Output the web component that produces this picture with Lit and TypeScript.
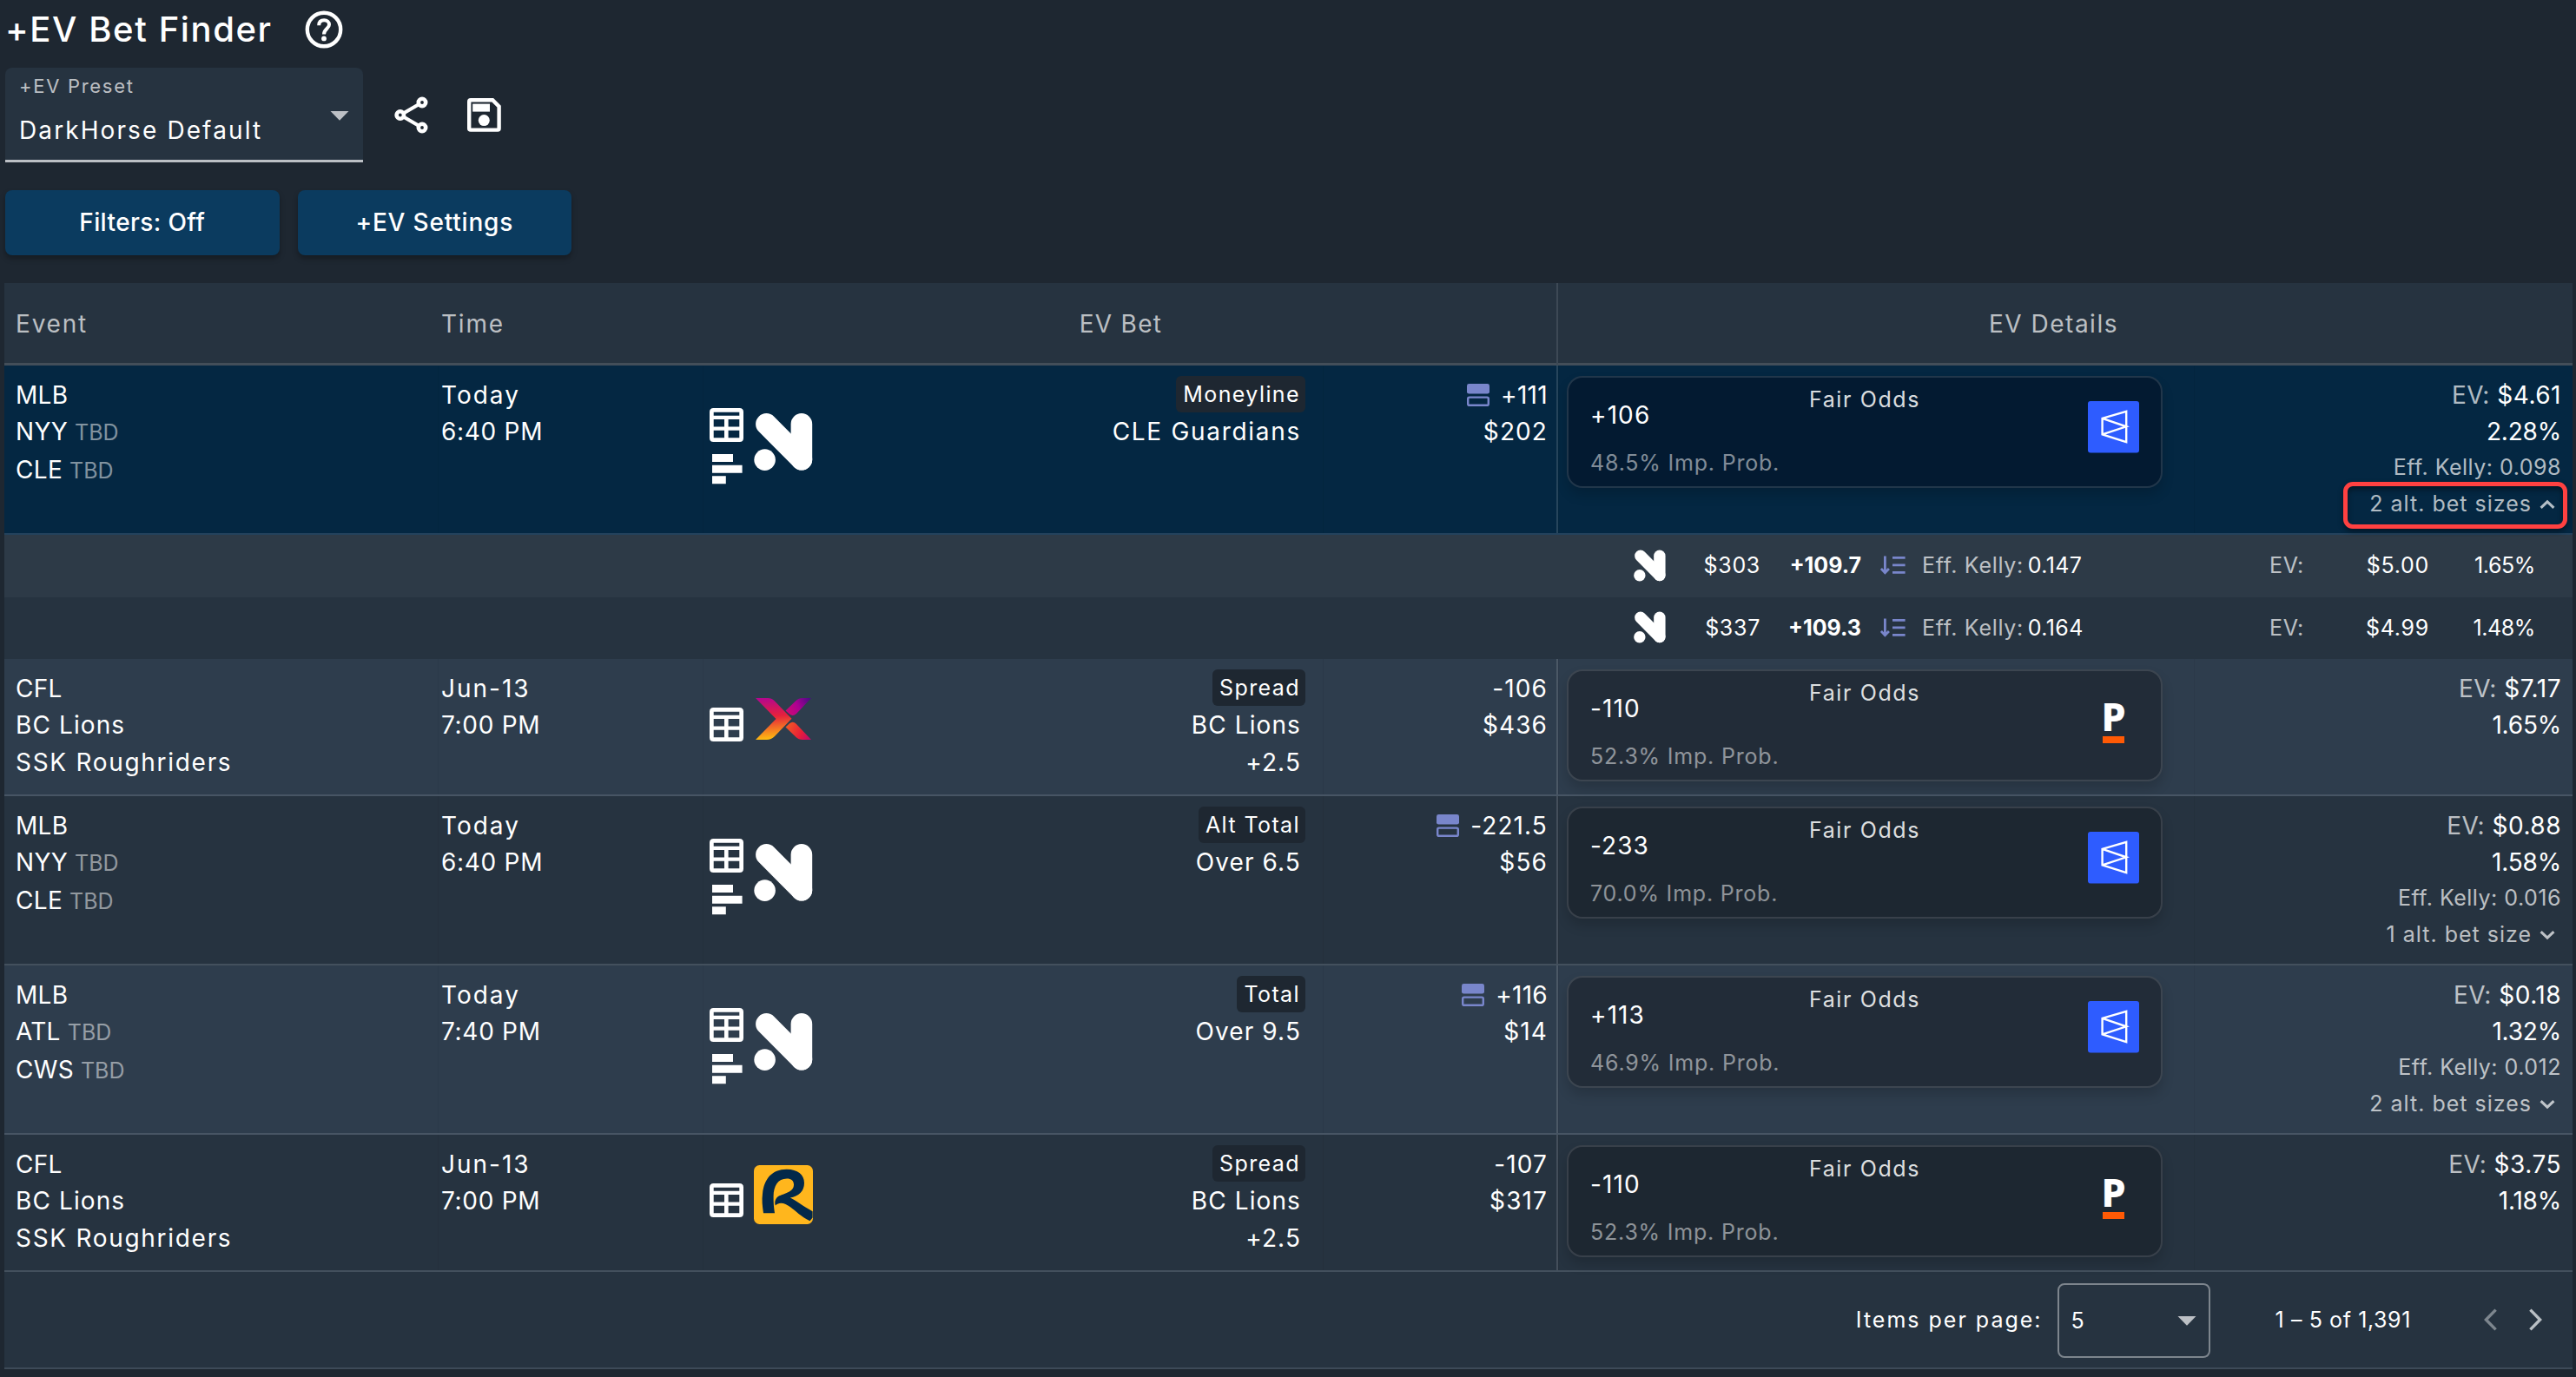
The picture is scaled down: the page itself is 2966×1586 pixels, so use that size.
import { LitElement, html, css, svg, nothing } from "lit";
import { customElement, property } from "lit/decorators.js";
import { classMap } from "lit/directives/class-map.js";

type Book = "novig" | "prophet" | "rivers";
type Sharp = "circa" | "pinnacle";

interface AltSize {
  stake: string;
  odds: string;
  kelly: string;
  ev: string;
  pct: string;
}

interface Bet {
  league: string;
  teams: { name: string; tbd?: boolean }[];
  day: string;
  time: string;
  book: Book;
  market: string;
  pick: string[];
  odds: string;
  layered?: boolean;
  stake: string;
  fair: string;
  prob: string;
  sharp: Sharp;
  ev: string;
  pct: string;
  kelly?: string;
  alt?: string;
  sizes?: AltSize[];
  shaded?: boolean;
}

const BETS: Bet[] = [
  {
    league: "MLB", teams: [{ name: "NYY", tbd: true }, { name: "CLE", tbd: true }],
    day: "Today", time: "6:40 PM", book: "novig", market: "Moneyline", pick: ["CLE Guardians"],
    odds: "+111", layered: true, stake: "$202", fair: "+106", prob: "48.5%", sharp: "circa",
    ev: "$4.61", pct: "2.28%", kelly: "0.098", alt: "2 alt. bet sizes",
    sizes: [
      { stake: "$303", odds: "+109.7", kelly: "0.147", ev: "$5.00", pct: "1.65%" },
      { stake: "$337", odds: "+109.3", kelly: "0.164", ev: "$4.99", pct: "1.48%" },
    ],
  },
  {
    league: "CFL", teams: [{ name: "BC Lions" }, { name: "SSK Roughriders" }],
    day: "Jun-13", time: "7:00 PM", book: "prophet", market: "Spread", pick: ["BC Lions", "+2.5"],
    odds: "-106", stake: "$436", fair: "-110", prob: "52.3%", sharp: "pinnacle",
    ev: "$7.17", pct: "1.65%", shaded: true,
  },
  {
    league: "MLB", teams: [{ name: "NYY", tbd: true }, { name: "CLE", tbd: true }],
    day: "Today", time: "6:40 PM", book: "novig", market: "Alt Total", pick: ["Over 6.5"],
    odds: "-221.5", layered: true, stake: "$56", fair: "-233", prob: "70.0%", sharp: "circa",
    ev: "$0.88", pct: "1.58%", kelly: "0.016", alt: "1 alt. bet size",
  },
  {
    league: "MLB", teams: [{ name: "ATL", tbd: true }, { name: "CWS", tbd: true }],
    day: "Today", time: "7:40 PM", book: "novig", market: "Total", pick: ["Over 9.5"],
    odds: "+116", layered: true, stake: "$14", fair: "+113", prob: "46.9%", sharp: "circa",
    ev: "$0.18", pct: "1.32%", kelly: "0.012", alt: "2 alt. bet sizes", shaded: true,
  },
  {
    league: "CFL", teams: [{ name: "BC Lions" }, { name: "SSK Roughriders" }],
    day: "Jun-13", time: "7:00 PM", book: "rivers", market: "Spread", pick: ["BC Lions", "+2.5"],
    odds: "-107", stake: "$317", fair: "-110", prob: "52.3%", sharp: "pinnacle",
    ev: "$3.75", pct: "1.18%",
  },
];

/** Mostly lowercase words get open tracking; codes and runs of ones sit tighter. */
const tracking = (text: string) => {
  if (/[a-z]{5,}/.test(text)) return "loose";
  if (/^[A-Z]{3}$/.test(text) || /1.?1/.test(text)) return "tight";
  return "";
};

const icon = (w: number, h: number, body: unknown) =>
  html`<svg width=${w} height=${h} viewBox="0 0 ${w} ${h}" fill="none">${body}</svg>`;

const helpIcon = icon(44, 44, svg`
  <circle cx="22" cy="22" r="19.2" stroke="#fff" stroke-width="4.4"/>
  <path d="M16.2 17.2 C16.2 12.6 19 11.2 22.2 11.2 C25.6 11.2 28 13.4 28 16.4 C28 20.8 22 21.4 22 27.4" stroke="#fff" stroke-width="4"/>
  <circle cx="22" cy="32.4" r="2.9" fill="#fff"/>`);

const shareIcon = icon(39, 43, svg`
  <path d="M7 21.5 L32 7 M7 21.5 L32 36" stroke="#fff" stroke-width="4.2"/>
  <g fill="#1e2731" stroke="#fff" stroke-width="4.6">
    <circle cx="6.8" cy="21.5" r="4.2"/><circle cx="32" cy="7" r="4.2"/><circle cx="32" cy="36" r="4.2"/>
  </g>`);

const saveIcon = icon(39, 39, svg`
  <path d="M4 2.2 H29.2 L36.6 9.6 V35 Q36.6 36.6 35 36.6 H4 Q2.2 36.6 2.2 35 V4 Q2.2 2.2 4 2.2 Z" stroke="#fff" stroke-width="4.4"/>
  <rect x="6.2" y="6.6" width="19.8" height="9" fill="#fff"/>
  <circle cx="19.3" cy="25.6" r="6.5" fill="#fff"/>`);

const caret = icon(22, 11, svg`<path d="M0.5 0 H21.5 L11 10.8 Z" fill="#bcc0c5"/>`);

const tableIcon = icon(39, 39, svg`
  <path fill="#fff" fill-rule="evenodd" d="M4.5 0 H34.5 Q39 0 39 4.5 V34.5 Q39 39 34.5 39 H4.5 Q0 39 0 34.5 V4.5 Q0 0 4.5 0 Z
    M4.7 4.7 V8.7 H34.3 V4.7 Z M4.7 13 V21.4 H17 V13 Z M21.6 13 V21.4 H34.3 V13 Z
    M4.7 25.8 V34.3 H17 V25.8 Z M21.6 25.8 V34.3 H34.3 V25.8 Z"/>`);

const barsIcon = icon(35, 35, svg`
  <path fill="#fff" d="M0 0 H24 V9 H0 Z M0 12.7 H34.6 V21.7 H0 Z M0 25.2 H15.8 V34.2 H0 Z"/>`);

const layersIcon = icon(26, 26, svg`
  <rect x="0" y="0" width="26" height="11.6" rx="2.4" fill="#7986cb"/>
  <rect x="1.2" y="15.6" width="23.6" height="9.2" rx="1.6" stroke="#7986cb" stroke-width="2.4"/>`);

const sortIcon = icon(29, 22, svg`
  <path d="M5.4 0.6 V19.4 M0.9 15 L5.4 19.8 L9.9 15" stroke="#7986cb" stroke-width="2.8"/>
  <path d="M14 2.4 H28.6 M14 10.9 H28.6 M14 19.4 H28.6" stroke="#7986cb" stroke-width="2.8"/>`);

const chevron = (up: boolean) => icon(18, 12, svg`
  <path d=${up ? "M1.6 9.8 L9 2.8 L16.4 9.8" : "M1.6 2.2 L9 9.2 L16.4 2.2"} stroke="currentColor" stroke-width="3.1"/>`);

const novigLogo = (size: number) => html`
  <svg width=${size} height=${size} viewBox="0 0 68 68" fill="none">
    <g stroke="#fff" stroke-width="24.6" stroke-linecap="round">
      <path d="M14.4 13.4 L54.9 54.2"/><path d="M54.9 13.4 V54.2"/>
    </g>
    <circle cx="12.6" cy="54.6" r="12.3" fill="#fff"/>
  </svg>`;

const prophetLogo = icon(68, 68, svg`
  <defs>
    <linearGradient id="px-a" gradientUnits="userSpaceOnUse" x1="12" y1="10" x2="16" y2="58">
      <stop offset="0" stop-color="#b4078f"/><stop offset="0.45" stop-color="#e6213c"/><stop offset="1" stop-color="#ffbe0f"/>
    </linearGradient>
    <linearGradient id="px-b" gradientUnits="userSpaceOnUse" x1="36" y1="26" x2="64" y2="10">
      <stop offset="0" stop-color="#d00a70"/><stop offset="0.5" stop-color="#ac0092"/><stop offset="1" stop-color="#4c0a86"/>
    </linearGradient>
    <linearGradient id="px-c" gradientUnits="userSpaceOnUse" x1="36" y1="44" x2="64" y2="58">
      <stop offset="0" stop-color="#f05a24"/><stop offset="0.6" stop-color="#e81f38"/><stop offset="1" stop-color="#c2086a"/>
    </linearGradient>
  </defs>
  <path fill="url(#px-a)" d="M2 10 H16 Q20.5 10 23.5 13 L43.5 33.8 L24 54 Q20 58 15 58 H2 L25.5 34 Z"/>
  <path fill="url(#px-b)" d="M66 10 H56 Q51.5 10 48.5 13 L36.5 24.5 L41 28.6 Q45 31.6 49 28 Z"/>
  <path fill="url(#px-c)" d="M66 58 H56 Q51.5 58 48.5 55 L36.5 43.6 L41 39.2 Q45 35.8 49 40 Z"/>`);

const riversLogo = icon(68, 68, svg`
  <rect width="68" height="68" rx="6.5" fill="#ffb61d"/>
  <path fill="#03294a" d="M11 55.3 C9.8 47 9 40 10 33 C11.8 15.5 21 5 37.5 4.8 C50 4.6 58 11 58 20.5
    C58 30 51.5 36 41.8 37.6 C48 40.5 56 47 67.6 53.2 L67.6 60.5 L64.5 64.2 C54 59 48 52.5 42 48.2
    C36 43.6 29.5 41.6 24.8 46.4 C23.8 43.5 24.2 40.4 26 38 C30.5 32.6 46 33 46 22.6
    C46 18 43 15.6 38 15.6 C27.5 15.6 22.8 24 22.6 36 C22.5 43 23 49 24 55.3 Z"/>`);

const circaLogo = icon(59, 60, svg`
  <rect width="59" height="59.5" rx="3" fill="#2e5cff"/>
  <path d="M16.6 19.8 L44.2 11.8 V47.2 L16.6 38.4 Z M16.6 19.8 L44.2 29.3 L16.6 38.4" stroke="#fff" stroke-width="2.4"/>`);

const pinnacleLogo = html`
  <div class="pinnacle"><span class="mark">P</span><span class="bar"></span></div>`;

const type = css`
  :host { font-family: Inter, "Liberation Sans", sans-serif; font-size: 28px; line-height: 42px; letter-spacing: 1.1px; color: #fff; }
  svg { display: block; flex: none; }
  .dim { color: rgba(255, 255, 255, 0.7); }
  .faint { color: rgba(255, 255, 255, 0.5); }
  .small { font-size: 25px; letter-spacing: 1px; }
  .loose { letter-spacing: 1.7px; }
  .tight { letter-spacing: 0.3px; }
`;

@customElement("fair-odds-card")
class FairOddsCard extends LitElement {
  @property() odds = "";
  @property() prob = "";
  @property() sharp: Sharp = "circa";

  static styles = [type, css`
    :host {
      box-sizing: border-box; display: grid; grid-template-columns: 1fr auto 1fr;
      width: 686px; height: 129px; margin: 12px 0 0 10px; padding: 0 25px;
      border: 2px solid rgba(255, 255, 255, 0.12); border-radius: 18px;
      background: rgba(20, 24, 32, 0.45); box-shadow: 0 8px 14px rgba(0, 0, 0, 0.16);
    }
    .left { display: flex; flex-direction: column; padding-top: 22px; white-space: nowrap; }
    .left .small { margin-top: 13px; letter-spacing: 0.8px; }
    .title { padding-top: 4px; color: rgba(255, 255, 255, 0.87); white-space: nowrap; letter-spacing: 1.6px; }
    .logo { justify-self: end; padding-top: 27px; }
    .pinnacle { display: flex; flex-direction: column; align-items: center; width: 59px; }
    .mark { font: 800 45px/52px "Noto Sans", sans-serif; letter-spacing: 0; margin-top: -1px; }
    .bar { width: 25px; height: 8px; margin-top: -3.5px; background: #ff5a05; }
  `];

  render() {
    return html`
      <div class="left"><span>${this.odds}</span><span class="small faint">${this.prob} Imp. Prob.</span></div>
      <div class="title small">Fair Odds</div>
      <div class="logo">${this.sharp === "circa" ? circaLogo : pinnacleLogo}</div>`;
  }
}

@customElement("bet-row")
class BetRow extends LitElement {
  @property({ attribute: false }) bet!: Bet;

  static styles = [type, css`
    :host { display: block; }
    .row {
      box-sizing: border-box; display: grid; grid-template-columns: 499px 305px 714px 269px 734px 1fr;
      height: 158px; border-bottom: 2px solid #43505d; background: #263340;
    }
    .tall { height: 195px; }
    .shaded { background: #2e3d4d; border-color: #475564; }
    .open { background: #042742; border-color: #23425d; }
    .cell { display: flex; flex-direction: column; padding: 13px 14px 0 13px; white-space: nowrap; }
    .cell + .cell { box-shadow: inset 1px 0 rgba(0, 0, 0, 0.05); }
    .last { line-height: 44px; }
    .team { display: flex; align-items: baseline; gap: 8px; }
    .team .small { letter-spacing: 0; }
    .time { padding-left: 4px; }
    .clock { letter-spacing: 0.7px; }
    .day { letter-spacing: 2px; }
    .pick { display: grid; grid-template-columns: 39px 68px 1fr; padding: 0 20px 0 8px; column-gap: 12px; }
    .icons { display: flex; flex-direction: column; gap: 14px; padding-top: 56px; }
    .icons svg + svg { margin-left: 3px; }
    .book { padding-top: 35px; }
    .tall .icons { padding-top: 49px; }
    .tall .book { padding-top: 54px; }
    .market { display: flex; flex-direction: column; align-items: flex-end; padding-top: 12px; }
    .chip { padding: 0 6px 0 8px; border-radius: 6px; background: #1e2731; letter-spacing: 1.4px; }
    .market .line { padding: 1px 5px 0 0; }
    .market .last { padding-top: 0; }
    .right { align-items: flex-end; padding-right: 10px; }
    .odds { display: flex; align-items: center; gap: 13px; }
    .fair { padding: 0; border-left: 2px solid rgba(255, 255, 255, 0.14); }
    .ev { align-items: flex-end; padding-right: 13px; letter-spacing: 0.5px; }
    .pct { letter-spacing: -0.2px; }
    .kelly { line-height: 40px; letter-spacing: 0.5px; }
    .more { display: flex; align-items: center; gap: 9px; margin-right: 7px; line-height: 44px; }
    .marked { position: relative; }
    .marked::after {
      content: ""; position: absolute; inset: -3px -14px -7px -30px; border: 5px solid #ff4141;
      border-radius: 11px; box-shadow: 0 3px 6px rgba(0, 0, 0, 0.45), inset 0 4px 6px rgba(0, 0, 0, 0.4);
    }
    .more svg { margin-top: 1px; }
    .open .card { background: rgba(4, 20, 38, 0.62); }
  `];

  render() {
    const b = this.bet;
    const open = !!b.sizes;
    const logo = b.book === "novig" ? novigLogo(68) : b.book === "prophet" ? prophetLogo : riversLogo;
    return html`
      <div class=${classMap({ row: true, tall: !!b.alt, shaded: !!b.shaded, open })}>
        <div class="cell">
          <span class=${tracking(b.league)}>${b.league}</span>
          ${b.teams.map((t, i) => html`
            <span class="team ${i ? "last" : ""}"><span class=${tracking(t.name)}>${t.name}</span>${t.tbd ? html`<span class="small faint">TBD</span>` : nothing}</span>`)}
        </div>
        <div class="cell time"><span class="day">${b.day}</span><span class="clock">${b.time}</span></div>
        <div class="cell pick">
          <div class="icons">${tableIcon}${b.book === "novig" ? barsIcon : nothing}</div>
          <div class="book">${logo}</div>
          <div class="market">
            <span class="chip small">${b.market}</span>
            ${b.pick.map((p, i) => html`<span class="line ${i ? "last" : ""} ${tracking(p)}">${p}</span>`)}
          </div>
        </div>
        <div class="cell right">
          <span class="odds">${b.layered ? layersIcon : nothing}<span class=${tracking(b.odds)}>${b.odds}</span></span>
          <span>${b.stake}</span>
        </div>
        <div class="cell fair">
          <fair-odds-card class="card" odds=${b.fair} prob=${b.prob} sharp=${b.sharp}></fair-odds-card>
        </div>
        <div class="cell ev">
          <span><span class="dim">EV:</span> ${b.ev}</span>
          <span class="pct">${b.pct}</span>
          ${b.kelly ? html`<span class="small dim kelly">Eff. Kelly: ${b.kelly}</span>` : nothing}
          ${b.alt ? html`<span class=${classMap({ more: true, small: true, dim: true, marked: open })}>${b.alt}${chevron(open)}</span>` : nothing}
        </div>
      </div>`;
  }
}

@customElement("alt-size-row")
class AltSizeRow extends LitElement {
  @property({ attribute: false }) size!: AltSize;

  static styles = [type, css`
    :host {
      box-sizing: border-box; display: grid; align-items: center; height: 71.5px; padding: 0 0 1px 1876px;
      grid-template-columns: 37px 109px 116px 51px 1fr 38px 146px 122px 43px; background: #263340;
      font-size: 25px; letter-spacing: 0.7px; white-space: nowrap;
    }
    :host(.striped) { background: #2d3a47; }
    .num { text-align: right; }
    .bold { font-weight: 700; letter-spacing: 0; }
    .sort { justify-self: end; }
    .kelly { padding-left: 19px; }
    .kelly .value { margin-left: -3px; letter-spacing: 0.4px; }
    .pct { letter-spacing: -0.4px; }
  `];

  render() {
    const s = this.size;
    return html`
      ${novigLogo(37)}
      <span class="num">${s.stake}</span>
      <span class="num bold">${s.odds}</span>
      <span class="sort">${sortIcon}</span>
      <span class="kelly"><span class="dim">Eff. Kelly:</span> <span class="value">${s.kelly}</span></span>
      <span class="dim">EV:</span>
      <span class="num">${s.ev}</span>
      <span class="num pct">${s.pct}</span>`;
  }
}

@customElement("app-root")
class AppRoot extends LitElement {
  static styles = [type, css`
    :host { box-sizing: border-box; display: block; width: 2966px; height: 1586px; padding: 0 4px 0 5px; overflow: hidden; background: #1e2731; }
    .head { display: flex; align-items: center; gap: 37px; height: 78px; box-sizing: border-box; padding: 0 0 11px 1px; }
    .title { font-size: 40px; font-weight: 500; letter-spacing: 1.6px; }
    .tools { display: flex; align-items: center; height: 109px; padding-left: 1px; }
    .preset {
      box-sizing: border-box; display: grid; grid-template-columns: 1fr auto; width: 412px; height: 109px; margin-right: 36px;
      padding: 8px 16px 0 16px; border-bottom: 3px solid #bcc0c5; border-radius: 8px 8px 0 0; background: #263340;
    }
    .label { display: block; height: 43px; font-size: 22px; line-height: 26px; letter-spacing: 1.7px; }
    .value { letter-spacing: 2.1px; }
    .preset svg { margin-top: 42px; }
    .save { margin-left: 45px; }
    .buttons { display: flex; gap: 21px; margin-top: 31.5px; padding-left: 1px; }
    .button {
      width: 315.5px; height: 75.5px; line-height: 75.5px; border-radius: 8px; background: #0b3b5f; text-align: center;
      font-weight: 500; letter-spacing: 0.8px; box-shadow: 0 4px 6px rgba(0, 0, 0, 0.3);
    }
    .button.filters { letter-spacing: 0.4px; }
    .table { width: 2957px; margin-top: 31.5px; }
    .header {
      box-sizing: border-box; display: grid; grid-template-columns: 499px 285px 1003px 1fr; height: 95.5px; line-height: 94px;
      border-bottom: 3px solid #434e59; background: #263340; color: rgba(255, 255, 255, 0.7); letter-spacing: 1.8px;
    }
    .header .event { padding-left: 13px; }
    .header .time { padding-left: 4px; }
    .header .mid { text-align: center; letter-spacing: 1.3px; }
    .header .details { padding-right: 27px; border-left: 2px solid #3d4955; letter-spacing: 1.5px; }
    .pager {
      box-sizing: border-box; display: flex; align-items: center; justify-content: flex-end; height: 112px; padding-right: 34px;
      border-bottom: 2px solid #3d4a58; background: #263340; font-size: 25px; letter-spacing: 0.6px;
    }
    .caption { letter-spacing: 2px; }
    .select {
      box-sizing: border-box; display: flex; align-items: center; justify-content: space-between; width: 176px; height: 86px;
      margin: 2px 75px 0 17px; padding: 0 14px; border: 2px solid #7d858d; border-radius: 8px;
    }
    .range { margin-right: 83px; }
    .next { margin-left: 35px; }
  `];

  render() {
    return html`
      <div class="head"><span class="title">+EV Bet Finder</span>${helpIcon}</div>
      <div class="tools">
        <div class="preset">
          <div><span class="label dim">+EV Preset</span><span class="value">DarkHorse Default</span></div>
          ${caret}
        </div>
        ${shareIcon}
        <div class="save">${saveIcon}</div>
      </div>
      <div class="buttons"><div class="button filters">Filters: Off</div><div class="button">+EV Settings</div></div>
      <div class="table">
        <div class="header">
          <span class="event">Event</span><span class="time">Time</span>
          <span class="mid">EV Bet</span><span class="mid details">EV Details</span>
        </div>
        ${BETS.map((bet) => html`
          <bet-row .bet=${bet}></bet-row>
          ${bet.sizes?.map((size, i) => html`<alt-size-row class=${i % 2 ? "" : "striped"} .size=${size}></alt-size-row>`) ?? nothing}`)}
        <div class="pager">
          <span class="caption">Items per page:</span>
          <div class="select"><span>5</span>${caret}</div>
          <span class="range">1 – 5 of 1,391</span>
          ${icon(17, 26, svg`<path d="M14.6 1.6 L3.4 13 L14.6 24.4" stroke="#7d868e" stroke-width="3.4"/>`)}
          <div class="next">${icon(17, 26, svg`<path d="M2.4 1.6 L13.6 13 L2.4 24.4" stroke="#b9bfc4" stroke-width="3.4"/>`)}</div>
        </div>
      </div>`;
  }
}
